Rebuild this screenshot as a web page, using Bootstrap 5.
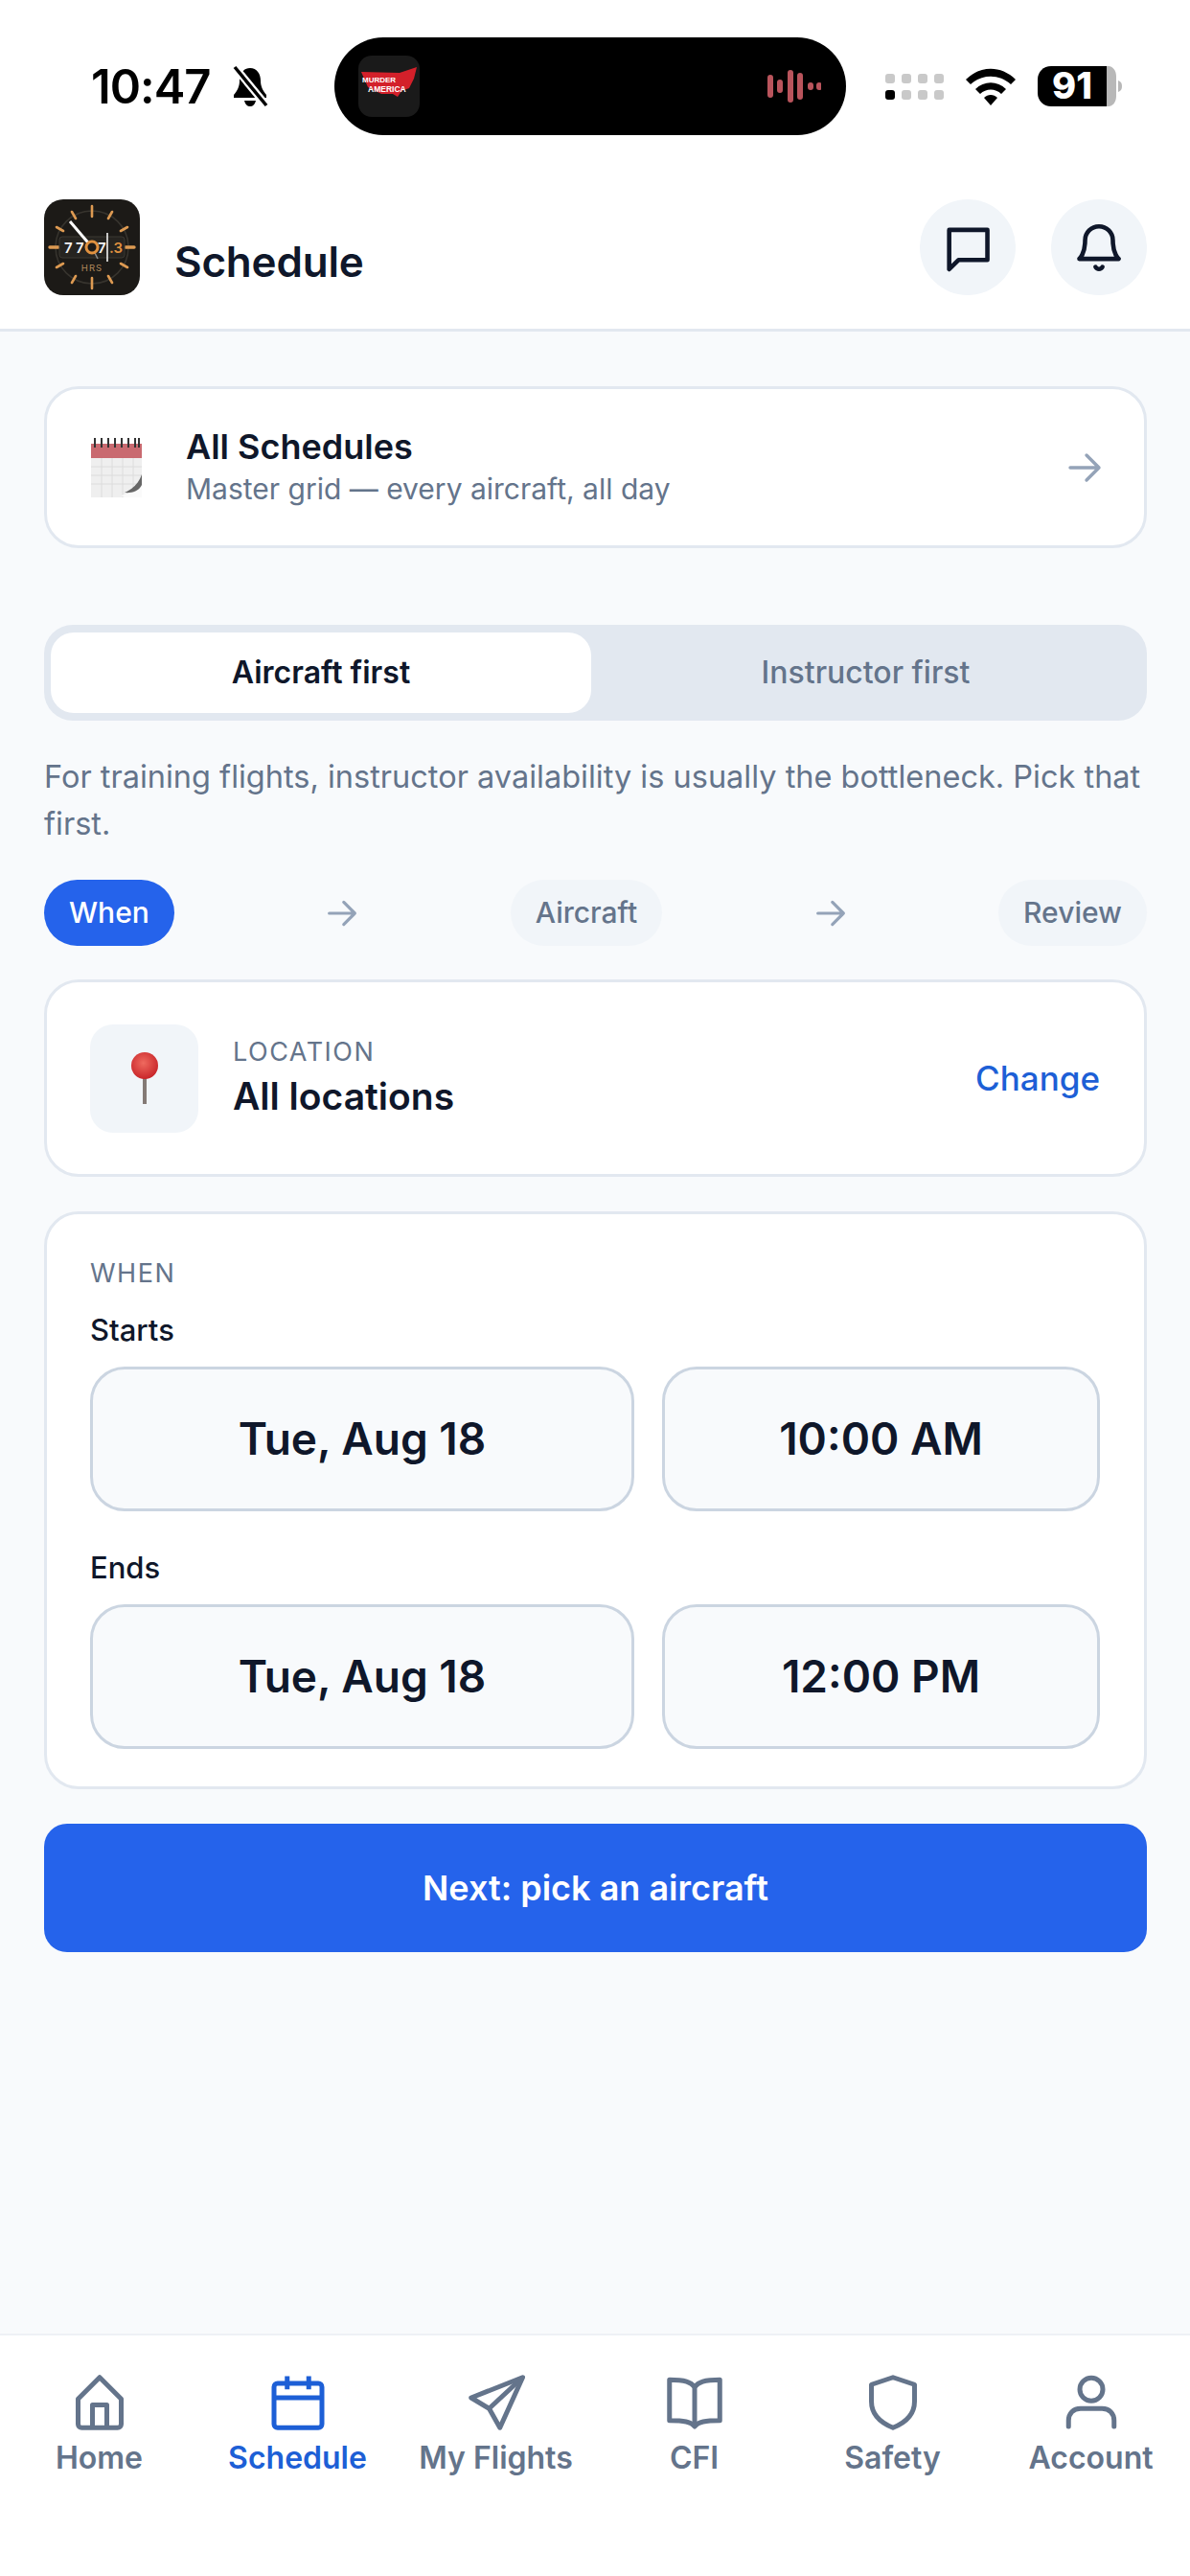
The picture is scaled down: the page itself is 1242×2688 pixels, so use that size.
<!DOCTYPE html>
<html lang="en">
<head>
    <meta charset="utf-8">
    <title>Schedule</title>
    <link rel="stylesheet" href="https://cdn.jsdelivr.net/npm/bootstrap@5.3.3/dist/css/bootstrap.min.css">
    <style>
        html, body { height: 100%; }
        body {
            font-family: Inter, "Liberation Sans", sans-serif;
            background-color: #f8fafc;
            color: #0f172a;
            width: 1242px;
            min-height: 2688px;
        }
        .top-area { background: #fff; border-bottom: 3px solid #e2e8f0; height: 346px; }
        .status-row { height: 102px; margin-top: 39px; padding-left: 95px; }
        .status-time { font-size: 49px; font-weight: 600; width: 145px; color: #000; letter-spacing: -1px; line-height: 1; }
        .status-left { width: 254px; }
        .island { width: 534px; height: 102px; background: #000; border-radius: 51px; padding: 0 26px 0 25px; }
        .status-right { margin-left: 41px; gap: 22px; }
        .cell-dots { display: grid; grid-template-columns: repeat(4, 10px); gap: 7px; }
        .cell-dots span { width: 10px; height: 10px; border-radius: 3px; background: #c9c9c9; }
        .cell-dots span.on { background: #000; }
        .head-row { margin-top: 67px; padding: 0 45px 0 46px; }
        .head-title { font-size: 44px; font-weight: 600; line-height: 1; margin: 0 0 13px 36px; color: #0f172a; letter-spacing: -.2px; }
        .round-btn { width: 100px; height: 100px; border-radius: 50%; background: #f1f5f9; border: 0; padding: 0; }
        .head-btns { gap: 37px; }
        .page-body { padding: 57px 45px 0 46px; flex: 1; }
        .panel { border: 3px solid #e2e8f0; border-radius: 36px; background: #fff; }
        .sched-link { height: 169px; padding: 0 44px 0 46px; }
        .sched-title { font-size: 36px; font-weight: 600; line-height: 44px; color: #0f172a; }
        .sched-sub { font-size: 30px; line-height: 44px; color: #64748b; }
        .sched-text { margin-left: 45px; padding-top: 1px; }
        .mode-toggle { margin-top: 80px; height: 100px; background: #e2e8f0; border-radius: 30px; padding: 8px 7px; }
        .mode-toggle div { flex: 1; border-radius: 24px; font-size: 32px; font-weight: 600; color: #64748b; }
        .mode-toggle .sel { flex: 0 0 564px; background: #fff; color: #0f172a; }
        .mode-toggle .other { font-weight: 500; }
        .hint { font-size: 32.5px; line-height: 49px; color: #64748b; margin: 34px 0 0; }
        .steps { margin-top: 34px; height: 69px; }
        .step { font-size: 30px; font-weight: 500; height: 69px; padding: 0 26px; border-radius: 35px; background: #f1f5f9; color: #64748b; }
        .step.now { background: #2563eb; color: #fff; }
        .loc-card { margin-top: 35px; height: 206px; padding: 0 46px 0 45px; }
        .pin-box { width: 113px; height: 113px; border-radius: 24px; background: #f1f5f9; }
        .eyebrow { font-size: 27px; line-height: 32px; letter-spacing: 1.5px; color: #64748b; font-weight: 400; }
        .loc-name { font-size: 39px; font-weight: 600; line-height: 50px; color: #0f172a; margin-top: 5px; }
        .loc-text { margin-left: 36px; }
        .change-link { font-size: 35px; font-weight: 500; color: #1d5fd6; text-decoration: none; }
        .when-card { margin-top: 36px; height: 603px; padding: 46px 46px 0 45px; }
        .field-label { font-size: 31px; line-height: 40px; font-weight: 500; color: #0f172a; }
        .when-card .first { margin-top: 23px; }
        .when-card .second { margin-top: 39px; }
        .pick-row { margin-top: 18px; gap: 29px; }
        .pick { height: 151px; border: 3px solid #cbd5e1; border-radius: 36px; background: #f8fafc; font-size: 46px; font-weight: 600; color: #0f172a; }
        .pick.date { flex: 0 0 568px; }
        .pick.time { flex: 1; }
        .next-btn { margin-top: 36px; height: 134px; width: 100%; border-radius: 24px; background: #2563eb; border: 0; font-size: 36px; font-weight: 600; }
        .bottom-bar { height: 253px; background: #fff; border-top: 2px solid #eef1f5; padding-top: 40px; }
        .bottom-bar a { flex: 1 1 0; color: #64748b; text-decoration: none; font-size: 32px; font-weight: 600; line-height: 40px; }
        .bottom-bar a.active { color: #1d5fd6; }
        .bottom-bar svg { display: block; margin: 0 auto 8px; }
    </style>
</head>
<body class="d-flex flex-column">

    <div class="top-area">
        <div class="status-row d-flex align-items-center">
            <div class="status-left d-flex align-items-center">
                <span class="status-time">10:47</span>
                <svg width="42" height="44" viewBox="0 0 42 44">
                    <path d="M21 3c-7 0-11 6-11 13 0 6-2 10-6 15v3h34v-3c-4-5-6-9-6-15 0-7-4-13-11-13z" fill="#000"/>
                    <path d="M15 37c1 4 3 6 6 6s5-2 6-6z" fill="#000"/>
                    <path d="M5 2l33 40" stroke="#fff" stroke-width="8"/>
                    <path d="M5 2l33 40" stroke="#000" stroke-width="3.5"/>
                </svg>
            </div>
            <div class="island d-flex align-items-center justify-content-between">
                <svg width="64" height="64" viewBox="0 0 64 64">
                    <rect width="64" height="64" rx="14" fill="#1a1a1a"/>
                    <path d="M3 17l40 1 18-6-3 12-5 10-8 3-4 6-5-3-12 0-14-7z" fill="#d3202a"/>
                    <text x="4" y="28" font-size="8" font-weight="700" fill="#fff" font-family="Liberation Sans">MURDER</text>
                    <text x="10" y="38" font-size="8.5" font-weight="700" fill="#fff" font-family="Liberation Sans">AMERICA</text>
                </svg>
                <svg width="56" height="34" viewBox="0 0 56 34" stroke="#b9545c" stroke-width="6" stroke-linecap="round">
                    <path d="M3 8v18M13 13v8M24 3v28M34 6v22M45 16v2M54 16v2"/>
                </svg>
            </div>
            <div class="status-right d-flex align-items-center">
                <div class="cell-dots">
                    <span></span><span></span><span></span><span></span>
                    <span class="on"></span><span></span><span></span><span></span>
                </div>
                <svg width="54" height="40" viewBox="0 0 54 40">
                    <path d="M1 13C16-2 38-2 53 13l-5 5C36 7 18 7 6 18z" fill="#000"/>
                    <path d="M11 23c9-9 23-9 32 0l-5 5c-6-6-16-6-22 0z" fill="#000"/>
                    <path d="M20 32c4-4 10-4 14 0l-7 8z" fill="#000"/>
                </svg>
                <svg width="88" height="42" viewBox="0 0 88 42">
                    <path d="M72 0h2c4 0 8 4 8 11v20c0 7-4 11-8 11h-2z" fill="#b8b8b8"/>
                    <path d="M14 0h58v42H14C6 42 0 36 0 28V14C0 6 6 0 14 0z" fill="#000"/>
                    <path d="M84 15c3 1 4 3 4 6s-1 5-4 6z" fill="#b8b8b8"/>
                    <text x="36" y="34" text-anchor="middle" font-size="38" font-weight="800" fill="#fff" font-family="Inter">91</text>
                </svg>
            </div>
        </div>

        <div class="head-row d-flex justify-content-between">
            <div class="d-flex align-items-end">
                <svg width="100" height="100" viewBox="0 0 100 100">
                    <rect width="100" height="100" rx="20" fill="#1c1a17"/>
                    <circle cx="50" cy="50" r="38" fill="none" stroke="#37342e" stroke-width="1.5"/>
                    <g stroke="#dd9a52" stroke-width="2.6" stroke-linecap="round">
                        <path d="M50 7v11M50 82v11M29 13l4 7M71 13l-4 7M13 29l7 4M87 29l-7 4M13 71l7-4M87 71l-7-4M29 87l4-7M71 87l-4-7"/>
                        <path d="M6 50h9M85 50h9" stroke-width="3.4"/>
                    </g>
                    <rect x="16" y="39" width="68" height="22" rx="3" fill="#262420" stroke="#3b3832"/>
                    <text x="21" y="56" font-size="15" font-weight="600" fill="#f2f2f2" font-family="Inter">7</text>
                    <text x="33" y="56" font-size="15" font-weight="600" fill="#f2f2f2" font-family="Inter">7</text>
                    <text x="45" y="56" font-size="15" font-weight="600" fill="#f2f2f2" font-family="Inter">7</text>
                    <text x="56" y="56" font-size="15" font-weight="600" fill="#f2f2f2" font-family="Inter">7</text>
                    <text x="68" y="56" font-size="15" font-weight="600" fill="#e0913f" font-family="Inter">.3</text>
                    <path d="M66 35v30" stroke="#f2f2f2" stroke-width="1.6"/>
                    <path d="M27 23l23 27" stroke="#fff" stroke-width="3"/>
                    <path d="M50 50l6 12" stroke="#8a8a8a" stroke-width="1.5"/>
                    <circle cx="50" cy="50" r="6" fill="#1c1a17" stroke="#e0913f" stroke-width="3"/>
                    <text x="50" y="75" text-anchor="middle" font-size="9.5" fill="#b28a5c" letter-spacing="1" font-family="Inter">HRS</text>
                </svg>
                <h1 class="head-title">Schedule</h1>
            </div>
            <div class="head-btns d-flex">
                <button class="round-btn d-flex align-items-center justify-content-center" aria-label="Messages">
                    <svg width="58" height="58" viewBox="0 0 24 24" fill="none" stroke="#0f172a" stroke-width="1.9" stroke-linejoin="round">
                        <path d="M4 4.500h16.500v13H8L4 21.500z"/>
                    </svg>
                </button>
                <button class="round-btn d-flex align-items-center justify-content-center" aria-label="Notifications">
                    <svg width="58" height="58" viewBox="0 0 24 24" fill="none" stroke="#0f172a" stroke-width="1.9" stroke-linecap="round" stroke-linejoin="round">
                        <path d="M6 9a6 6 0 0 1 12 0c0 6 2.500 8 2.500 8h-17S6 15 6 9z"/>
                        <path d="M10.500 20.500a1.700 1.700 0 0 0 3 0"/>
                    </svg>
                </button>
            </div>
        </div>
    </div>

    <main class="page-body">
        <div class="panel sched-link d-flex align-items-center">
            <svg width="54" height="62" viewBox="0 0 54 62">
                <rect x="0" y="6" width="53" height="56" fill="#efefef"/>
                <rect x="0" y="6" width="53" height="15" fill="#c96a70"/>
                <g stroke="#dcdcdc" stroke-width="1">
                    <path d="M0 30h53M0 39h53M0 48h53M11 21v41M22 21v41M33 21v41M44 21v41"/>
                </g>
                <path d="M4 0v10M11 0v10M18 0v10M25 0v10M32 0v10M39 0v10M46 0v10M50 0v10" stroke="#333" stroke-width="2"/>
                <path d="M53 38c-1 10-10 20-22 22l4 2h18z" fill="#fafafa"/>
                <path d="M53 38c-3 9-9 15-18 19 9 1 16-3 18-8z" fill="#666"/>
            </svg>
            <div class="sched-text flex-grow-1">
                <div class="sched-title">All Schedules</div>
                <div class="sched-sub">Master grid — every aircraft, all day</div>
            </div>
            <svg width="36" height="36" viewBox="0 0 36 36" fill="none" stroke="#94a3b8" stroke-width="3.400" stroke-linecap="round" stroke-linejoin="round">
                <path d="M3 18h30M20 5l13 13-13 13"/>
            </svg>
        </div>

        <div class="mode-toggle d-flex">
            <div class="sel d-flex align-items-center justify-content-center">Aircraft first</div>
            <div class="other d-flex align-items-center justify-content-center">Instructor first</div>
        </div>

        <p class="hint">For training flights, instructor availability is usually the bottleneck. Pick that first.</p>

        <div class="steps d-flex align-items-center justify-content-between">
            <span class="step now d-flex align-items-center">When</span>
            <svg width="32" height="32" viewBox="0 0 36 36" fill="none" stroke="#94a3b8" stroke-width="3.600" stroke-linecap="round" stroke-linejoin="round"><path d="M3 18h30M20 5l13 13-13 13"/></svg>
            <span class="step d-flex align-items-center">Aircraft</span>
            <svg width="32" height="32" viewBox="0 0 36 36" fill="none" stroke="#94a3b8" stroke-width="3.600" stroke-linecap="round" stroke-linejoin="round"><path d="M3 18h30M20 5l13 13-13 13"/></svg>
            <span class="step d-flex align-items-center">Review</span>
        </div>

        <div class="panel loc-card d-flex align-items-center">
            <div class="pin-box d-flex align-items-center justify-content-center">
                <svg width="30" height="54" viewBox="0 0 30 54">
                    <defs>
                        <radialGradient id="pinHead" cx="45%" cy="40%" r="60%">
                            <stop offset="0" stop-color="#ef6a5f"/>
                            <stop offset="1" stop-color="#c9262a"/>
                        </radialGradient>
                    </defs>
                    <rect x="13" y="24" width="4" height="30" fill="#847a76"/>
                    <circle cx="15" cy="14" r="14" fill="url(#pinHead)"/>
                </svg>
            </div>
            <div class="loc-text flex-grow-1">
                <div class="eyebrow">LOCATION</div>
                <div class="loc-name">All locations</div>
            </div>
            <a href="#" class="change-link">Change</a>
        </div>

        <div class="panel when-card">
            <div class="eyebrow">WHEN</div>
            <div class="field-label first">Starts</div>
            <div class="pick-row d-flex">
                <div class="pick date d-flex align-items-center justify-content-center">Tue, Aug 18</div>
                <div class="pick time d-flex align-items-center justify-content-center">10:00 AM</div>
            </div>
            <div class="field-label second">Ends</div>
            <div class="pick-row d-flex">
                <div class="pick date d-flex align-items-center justify-content-center">Tue, Aug 18</div>
                <div class="pick time d-flex align-items-center justify-content-center">12:00 PM</div>
            </div>
        </div>

        <button class="btn btn-primary next-btn">Next: pick an aircraft</button>
    </main>

    <nav class="bottom-bar d-flex text-center">
        <a href="#">
            <svg width="60" height="60" viewBox="0 0 24 24" fill="none" stroke="currentColor" stroke-width="2" stroke-linejoin="round"><path d="M3 10.500 12 1.500l9 9V21a1.500 1.500 0 0 1-1.500 1.500h-15A1.500 1.500 0 0 1 3 21z"/><path d="M9 22.500V13h6v9.500"/></svg>
            Home
        </a>
        <a href="#" class="active">
            <svg width="60" height="60" viewBox="0 0 24 24" fill="none" stroke="currentColor" stroke-width="2" stroke-linejoin="round"><rect x="2" y="4" width="20" height="18.500" rx="1.500"/><path d="M2 10h20M7.500 1v5.500M16.500 1v5.500"/></svg>
            Schedule
        </a>
        <a href="#">
            <svg width="60" height="60" viewBox="0 0 24 24" fill="none" stroke="currentColor" stroke-width="2" stroke-linejoin="round"><path d="M23 1.500 1.500 10l7.500 4.500 4.500 8z"/><path d="M23 1.500 9 14.500"/></svg>
            My Flights
        </a>
        <a href="#">
            <svg width="60" height="60" viewBox="0 0 24 24" fill="none" stroke="currentColor" stroke-width="2" stroke-linejoin="round"><path d="M12 5.500C10.500 3.500 8 2.500 1.500 2.500v17c6 0 9 .5 10.500 2.500 1.500-2 4.500-2.500 10.500-2.500v-17C16 2.500 13.500 3.500 12 5.500z"/><path d="M12 5.500V22"/></svg>
            CFI
        </a>
        <a href="#">
            <svg width="60" height="60" viewBox="0 0 24 24" fill="none" stroke="currentColor" stroke-width="2" stroke-linejoin="round"><path d="M12 1.500 21 4.500v7c0 5.500-4 9-9 11-5-2-9-5.500-9-11v-7z"/></svg>
            Safety
        </a>
        <a href="#">
            <svg width="60" height="60" viewBox="0 0 24 24" fill="none" stroke="currentColor" stroke-width="2" stroke-linecap="round"><circle cx="12" cy="6.500" r="4.800"/><path d="M2.500 22v-2.500c0-3 2-5 5-5h9c3 0 5 2 5 5V22"/></svg>
            Account
        </a>
    </nav>

    <script src="https://cdn.jsdelivr.net/npm/bootstrap@5.3.3/dist/js/bootstrap.bundle.min.js"></script>
</body>
</html>
